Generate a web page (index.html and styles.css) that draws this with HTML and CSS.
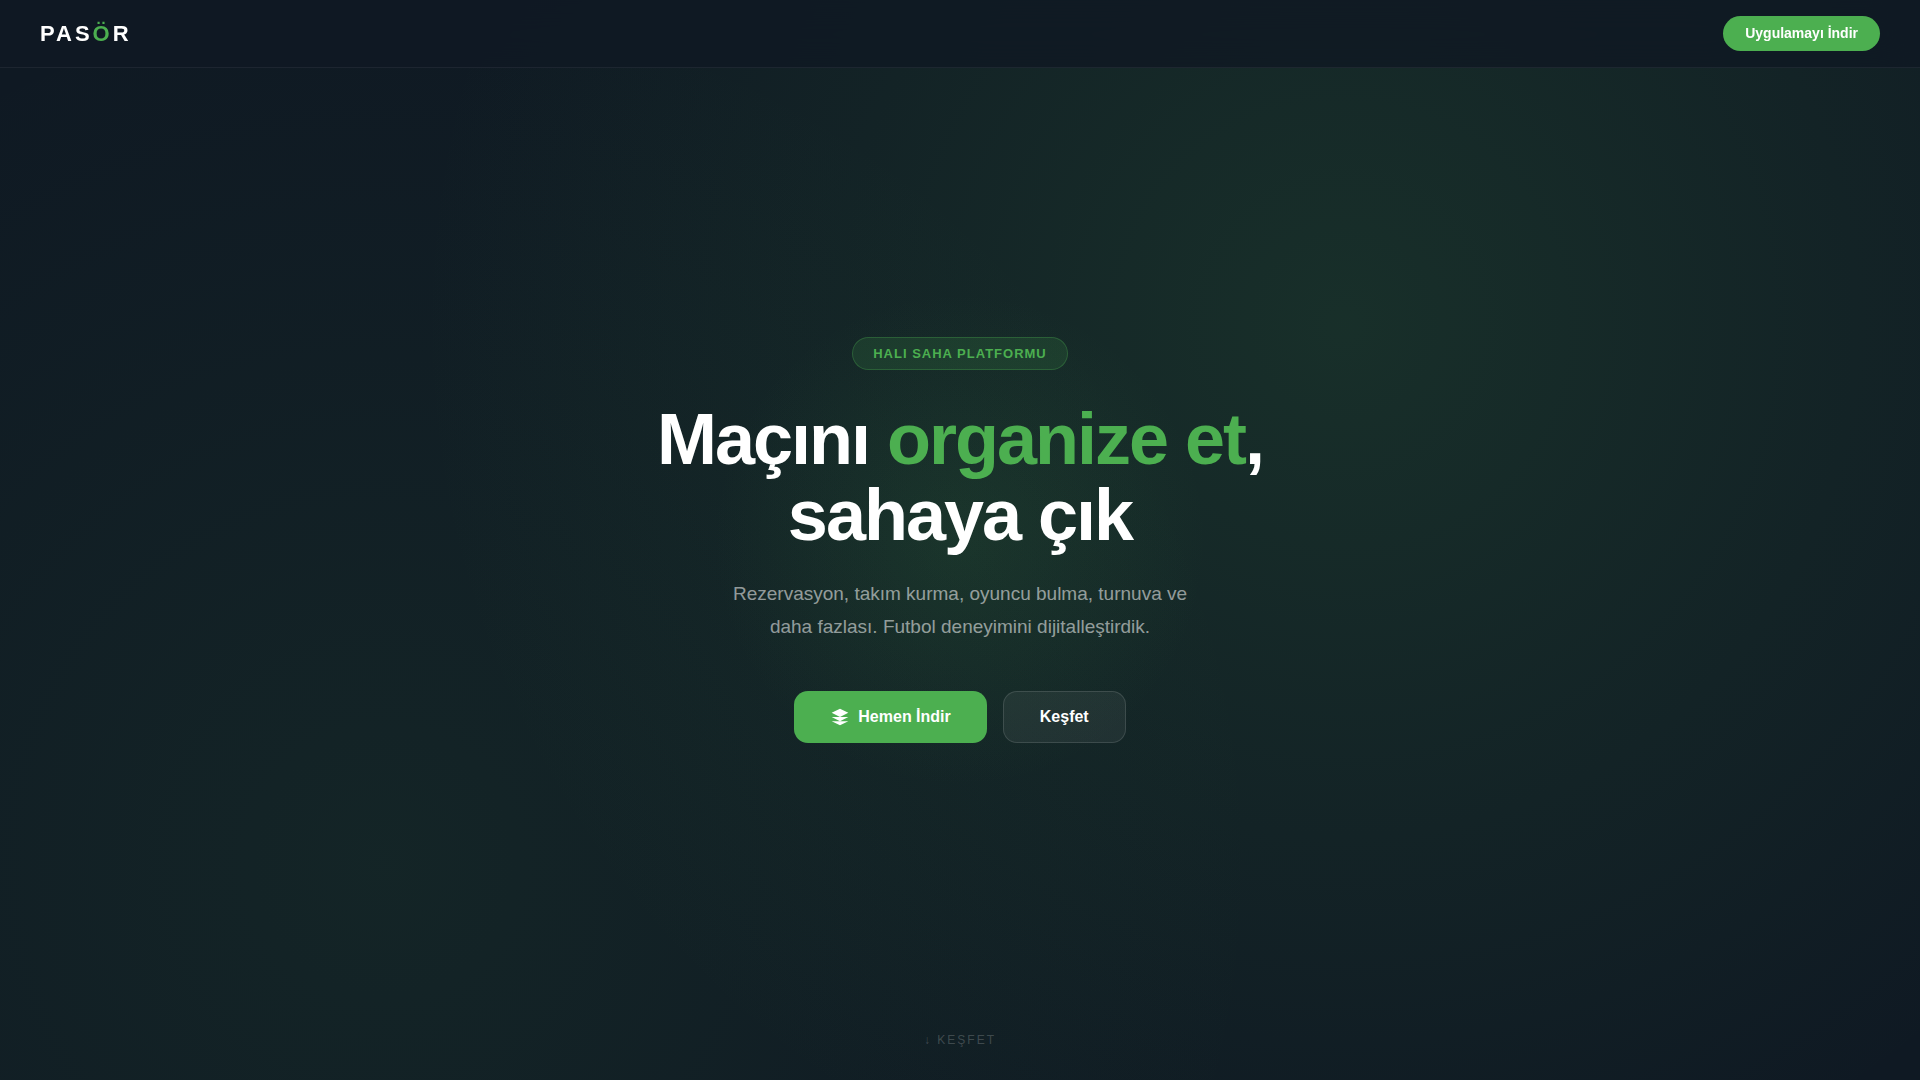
FILE: index.html
```html
<!DOCTYPE html>
<html lang="tr">
<head>
  <meta charset="utf-8">
  <meta name="viewport" content="width=device-width, initial-scale=1">
  <title>PASÖR</title>
  <link rel="stylesheet" href="styles.css">
</head>
<body>
  <header class="nav">
    <a class="logo" href="#top">PAS<span class="accent">Ö</span>R</a>
    <a class="nav-cta" href="#indir">Uygulamayı İndir</a>
  </header>
  <main class="hero" id="top">
    <div class="hero-content">
      <span class="badge">HALI SAHA PLATFORMU</span>
      <h1 class="title">Maçını <span class="accent">organize et</span>,<br>sahaya çık</h1>
      <p class="lead">Rezervasyon, takım kurma, oyuncu bulma, turnuva ve daha fazlası. Futbol deneyimini dijitalleştirdik.</p>
      <div class="actions">
        <a class="btn btn-primary" href="#indir">
          <svg class="icon" viewBox="0 0 24 24" fill="currentColor" aria-hidden="true"><path d="M12 2L2 7l10 5 10-5-10-5zM2 17l10 5 10-5M2 12l10 5 10-5"/></svg>
          Hemen İndir
        </a>
        <a class="btn btn-secondary" href="#kesfet">Keşfet</a>
      </div>
    </div>
    <a class="scroll-hint" href="#kesfet">↓ KEŞFET</a>
  </main>
</body>
</html>
```
FILE: styles.css
```css
* {
  box-sizing: border-box;
  margin: 0;
  padding: 0;
}

body {
  background: #0f1923;
  color: #fff;
  font-family: "Liberation Sans", Arial, sans-serif;
}

a {
  color: inherit;
  text-decoration: none;
}

.accent {
  color: #4caf50;
}

.nav {
  position: fixed;
  top: 0;
  left: 0;
  right: 0;
  z-index: 10;
  display: flex;
  align-items: center;
  justify-content: space-between;
  padding: 16px 40px;
  background: rgba(15, 25, 35, 0.85);
  backdrop-filter: blur(20px);
  border-bottom: 1px solid rgba(255, 255, 255, 0.06);
}

.logo {
  font-size: 22px;
  font-weight: 700;
  letter-spacing: 3px;
}

.nav-cta {
  padding: 10px 22px;
  border-radius: 24px;
  background: #4caf50;
  font-size: 14px;
  font-weight: 700;
  line-height: 15px;
}

.hero {
  position: relative;
  display: flex;
  flex-direction: column;
  align-items: center;
  justify-content: center;
  min-height: 100vh;
  padding: 100px 24px;
  background:
    radial-gradient(circle at center, rgba(76, 175, 80, 0.1) 0, transparent 248px),
    radial-gradient(circle at 70% 30%, rgba(76, 175, 80, 0.15) 0%, transparent 60%),
    radial-gradient(circle at 20% 80%, rgba(76, 175, 80, 0.08) 0%, transparent 50%),
    #0f1923;
}

.hero-content {
  display: flex;
  flex-direction: column;
  align-items: center;
  text-align: center;
}

.badge {
  padding: 8px 20px;
  border: 1px solid rgba(76, 175, 80, 0.3);
  border-radius: 20px;
  background: rgba(76, 175, 80, 0.15);
  color: #4caf50;
  font-size: 13px;
  font-weight: 700;
  letter-spacing: 1px;
}

.title {
  margin-top: 32px;
  font-size: 72px;
  font-weight: 700;
  line-height: 1.05;
  letter-spacing: -2px;
}

.lead {
  max-width: 480px;
  margin-top: 24px;
  color: rgba(255, 255, 255, 0.55);
  font-size: 19px;
  line-height: 33px;
}

.actions {
  display: flex;
  gap: 16px;
  margin-top: 48px;
}

.btn {
  display: flex;
  align-items: center;
  gap: 8px;
  min-height: 52px;
  padding: 0 36px;
  border-radius: 14px;
  font-size: 16px;
  font-weight: 700;
}

.btn-primary {
  background: #4caf50;
}

.btn-secondary {
  border: 1px solid rgba(255, 255, 255, 0.12);
  background: rgba(255, 255, 255, 0.06);
}

.icon {
  width: 20px;
  height: 20px;
}

.scroll-hint {
  position: absolute;
  bottom: 32px;
  color: rgba(255, 255, 255, 0.2);
  font-size: 12px;
  line-height: 16px;
  letter-spacing: 2px;
}
```
